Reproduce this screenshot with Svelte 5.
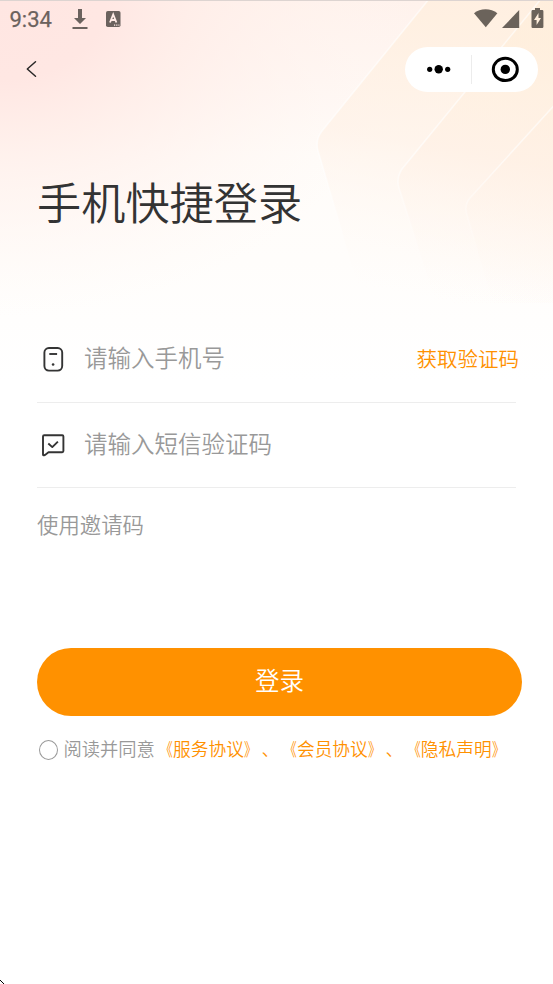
<script>
  const agreements = ['服务协议', '会员协议', '隐私声明'];
</script>

<main class="screen">
  <svg class="backdrop" width="553" height="400" viewBox="0 0 553 400" aria-hidden="true">
    <defs>
      <radialGradient id="rose" gradientUnits="userSpaceOnUse" cx="0" cy="0" r="420" gradientTransform="scale(1 .75)">
        <stop offset="0" stop-color="#ffe6e2" />
        <stop offset=".25" stop-color="#ffe7e3" />
        <stop offset=".45" stop-color="#ffede8" stop-opacity=".8" />
        <stop offset="1" stop-color="#fff7f3" stop-opacity="0" />
      </radialGradient>
      <linearGradient id="base" x1="0" y1="0" x2="0" y2="1">
        <stop offset="0" stop-color="#fff2ec" />
        <stop offset=".2" stop-color="#fff7f3" />
        <stop offset=".38" stop-color="#fffcf9" />
        <stop offset=".65" stop-color="#fffdfb" />
        <stop offset=".95" stop-color="#ffffff" />
      </linearGradient>
      <linearGradient id="peach" gradientUnits="userSpaceOnUse" x1="490" y1="30" x2="440" y2="300">
        <stop offset="0" stop-color="#ffeeda" stop-opacity=".6" />
        <stop offset=".45" stop-color="#fff0e4" stop-opacity=".6" />
        <stop offset="1" stop-color="#fff8f3" stop-opacity="0" />
      </linearGradient>
      <linearGradient id="edge" gradientUnits="userSpaceOnUse" x1="0" y1="60" x2="0" y2="260">
        <stop offset="0" stop-color="#fff" stop-opacity=".6" />
        <stop offset=".5" stop-color="#fff" stop-opacity=".6" />
        <stop offset="1" stop-color="#fff" stop-opacity="0" />
      </linearGradient>
    </defs>
    <rect width="553" height="400" fill="url(#base)" />
    <rect width="553" height="400" fill="url(#rose)" />
    <g fill="url(#peach)" stroke="url(#edge)" stroke-width="1.5">
      <path d="M429-2 322 130Q315 139 318 150L363 302H560V-2Z" />
      <path d="M541-2 402 168Q396 177 399 187L436 302H560V-2Z" />
      <path d="M560 98 470 197Q464 204 467 214L493 302H560Z" />
    </g>
  </svg>

  <header class="status">
    <span class="time">9:34</span>
    <svg class="download" width="16" height="22" viewBox="0 0 16 22">
      <path d="M6 1h4v9h4l-6 6-6-6h4z" fill="#6b625e" />
      <path d="M.5 20h15" stroke="#6b625e" stroke-width="2" />
    </svg>
    <svg class="keyboard" width="15" height="17" viewBox="0 0 15 17">
      <rect width="14.5" height="16" rx="1.8" fill="#6b625e" />
      <path d="m4 11.5 3.2-8 3.2 8M5.2 9h4" fill="none" stroke="#ffebe6" stroke-width="1.8" />
      <path d="M8 14.2h1.2m1 0h1.2m1 0h1" stroke="#ffebe6" stroke-width="1.2" />
    </svg>
    <svg class="signals" width="71" height="22" viewBox="0 0 71 22" fill="#6b635b">
      <path d="M0 5.2C6-.2 17-.2 23.4 5.2L11.8 19.2Z" />
      <path d="M45.2 2v18H28Z" />
      <path fill-rule="evenodd" d="M61 0h5v2h2.2q1.2 0 1.2 1.2v15.500q0 1.300-1.200 1.300H58.700q-1.200 0-1.200-1.300V3.200Q57.500 2 58.700 2H61zM64.500 5 60 12h2.600v5L67 10h-2.500z" />
    </svg>
  </header>

  <nav class="bar">
    <svg class="back" width="12" height="18" viewBox="0 0 12 18" fill="none" stroke="#292727" stroke-width="1.5" stroke-linecap="round" stroke-linejoin="round">
      <path d="M9.500 1.800 1.300 9l8.200 7.200" />
    </svg>
    <div class="capsule">
      <svg width="24" height="10" viewBox="0 0 24 10">
        <circle cx="2.700" cy="5.300" r="2.600" /><circle cx="11.700" cy="5.300" r="4.200" /><circle cx="20.700" cy="5.300" r="2.600" />
      </svg>
      <i></i>
      <svg width="28" height="28" viewBox="0 0 28 28">
        <ellipse cx="14.300" cy="14.400" rx="12" ry="11.200" fill="none" stroke="#000" stroke-width="3" /><circle cx="14.300" cy="14.400" r="4.700" />
      </svg>
    </div>
  </nav>

  <h1>手机快捷登录</h1>

  <section class="form">
    <div class="field phone">
      <svg width="32" height="32" viewBox="0 0 32 32" fill="none" stroke="#343434" stroke-width="1.900">
        <rect x="7.400" y="5" width="17.800" height="22.600" rx="4.500" />
        <path d="M12.300 11h7.800" /><circle cx="16.100" cy="21.500" r="1.300" fill="#343434" stroke="none" />
      </svg>
      <span class="hint">请输入手机号</span>
      <span class="send">获取验证码</span>
    </div>
    <div class="field sms">
      <svg width="32" height="32" viewBox="0 0 32 32" fill="none" stroke="#343434" stroke-width="1.900" stroke-linejoin="round">
        <path d="M6 25.500V7.500q0-1.200 1.200-1.200h18q1.200 0 1.200 1.200v14.600q0 1.200-1.200 1.200H11.500L8 25.900q-2 1-2-.4Z" />
        <path d="m11.300 14.500 4 3.600 5.600-5.500" />
      </svg>
      <span class="hint">请输入短信验证码</span>
    </div>
  </section>

  <p class="invite">使用邀请码</p>
  <button>登录</button>

  <div class="terms">
    <span class="radio"></span>
    <span class="read">阅读并同意</span>
    <span class="links">{#each agreements as name, i}{#if i}、{/if}<span class="open">《</span>{name}<span class="close">》</span>{/each}</span>
  </div>

  <svg class="pointer" width="4" height="4" viewBox="0 0 4 4" shape-rendering="crispEdges"><path d="M0 0h1v1H0zM1 1h1v1H1zM2 2h1v1H2zM3 3h1v1H3z" /></svg>
</main>

<style>
  :global(body) { margin: 0; background: #fff; }
  .screen {
    position: relative;
    box-sizing: border-box;
    width: 553px;
    height: 984px;
    overflow: hidden;
    border-top: 1px solid #ddd4d1;
    font-family: "Noto Sans CJK SC", "Noto Sans", sans-serif;
    font-weight: 350;
    text-spacing-trim: space-all;
    display: flex;
    flex-direction: column;
  }
  svg { display: block; flex: none; }
  .backdrop { position: absolute; inset: 0 auto auto 0; z-index: -1; }
  .status { display: flex; align-items: flex-start; height: 45px; box-sizing: border-box; padding: 7px 8px 0 9.500px; }
  .time { width: 62px; font: 400 22px/23px Roboto, sans-serif; color: #6b625e; -webkit-text-stroke: .25px #6b625e; }
  .keyboard { margin: 3px 0 0 18.500px; }
  .signals { margin-left: auto; }
  .bar { display: flex; align-items: center; justify-content: space-between; height: 47px; padding: 0 15px 0 26px; }
  .back { margin-bottom: 1px; }
  .capsule { display: flex; align-items: center; width: 133px; height: 45px; border-radius: 23px; background: #fff; box-sizing: border-box; padding: 0 0 1px 22px; }
  .capsule i { width: 1px; height: 29px; margin: 0 19px 0 20px; background: #ececec; }
  h1 { margin: 75px 0 0 37px; font-size: 44.200px; line-height: 66px; font-weight: 350; color: #333; }
  .form { margin: 81px 37px 0; }
  .field { display: flex; align-items: center; height: 84px; border-bottom: 1px solid #ededed; color: #999; }
  .phone { height: 87px; }
  .hint { margin: 0 0 3px 15px; font-size: 23.500px; line-height: 34px; }
  .sms .hint { margin-bottom: 5px; }
  .send { margin: 0 -3px 2px auto; font-size: 20.500px; line-height: 30px; color: #ff9100; }
  .invite { margin: 20px 37px 0; font-size: 21.400px; line-height: 32px; color: #999; }
  button { width: 485px; height: 68px; margin: 107.500px 0 0 37px; padding: 0 0 3px; border: 0; border-radius: 34px; background: #ff9100; color: #fff; font: 350 24.500px/36px "Noto Sans CJK SC", sans-serif; }
  .terms { display: flex; align-items: center; height: 28px; margin: 20px 0 0 39px; font-size: 17.700px; line-height: 28px; white-space: nowrap; }
  .radio { width: 19px; height: 20px; box-sizing: border-box; border: 1.500px solid #999; border-radius: 50%; }
  .read { margin: 0 0 3px 5.500px; font-size: 18.300px; color: #999; }
  .links { margin: 0 0 3px .500px; color: #ff9100; }
  .open, .close { display: inline-block; transform: scaleX(.72); }
  .open { transform-origin: right; }
  .close { transform-origin: left; }
  .pointer { position: absolute; left: 0; bottom: 0; }
</style>
